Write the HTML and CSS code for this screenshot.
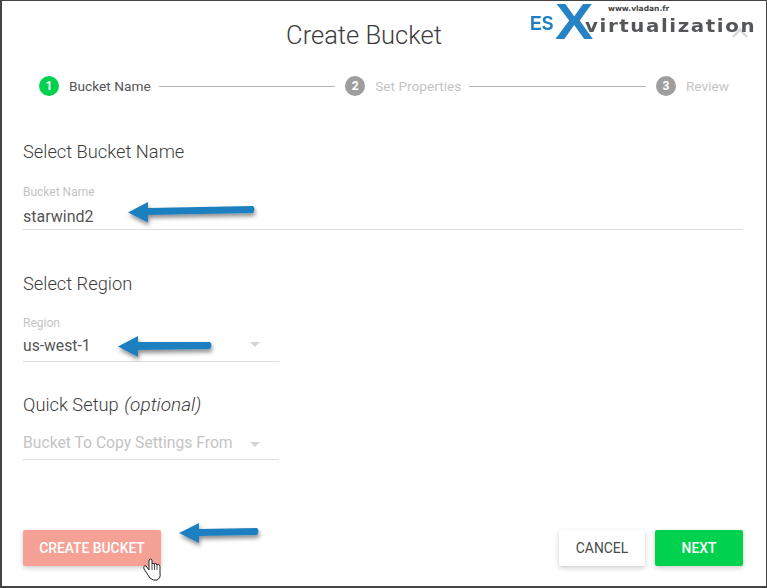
FILE: index.html
```html
<!DOCTYPE html>
<html lang="en">
<head>
<meta charset="utf-8">
<title>Create Bucket</title>
<link rel="stylesheet" href="styles.css">
</head>
<body>
<main class="dialog">
  <header class="dialog-header"><h1 class="dialog-title">Create Bucket</h1></header>
  <svg class="close-icon" width="24" height="24" viewBox="0 0 24 24"><path d="M5 17 L12 9.500 L19 17" fill="none" stroke="#d8d8d8" stroke-width="2.400"/></svg>
  <div class="logo">
    <span class="logo-url">www.vladan.fr</span>
    <span class="logo-es">ES</span><span class="logo-x">X</span><span class="logo-virt">virtualization</span>
  </div>

  <ol class="stepper">
    <li class="step step-active"><span class="step-num">1</span><span class="step-label">Bucket Name</span></li>
    <li class="step-line"></li>
    <li class="step"><span class="step-num">2</span><span class="step-label">Set Properties</span></li>
    <li class="step-line"></li>
    <li class="step"><span class="step-num">3</span><span class="step-label">Review</span></li>
  </ol>

  <section class="form-body">
    <h2 class="section-title section-first">Select Bucket Name</h2>
    <div class="field field-wide">
      <span class="field-label">Bucket Name</span>
      <span class="field-value">starwind2</span>
    </div>

    <h2 class="section-title section-region">Select Region</h2>
    <div class="field field-select">
      <span class="field-label">Region</span>
      <span class="field-value">us-west-1</span>
      <span class="caret"></span>
    </div>

    <h2 class="section-title section-quick">Quick Setup <em class="optional">(optional)</em></h2>
    <div class="field field-select field-empty">
      <span class="field-value field-placeholder">Bucket To Copy Settings From</span>
      <span class="caret"></span>
    </div>
  </section>

  <footer class="dialog-footer">
    <button class="btn btn-create">CREATE BUCKET</button>
    <div class="footer-right">
      <button class="btn btn-cancel">CANCEL</button>
      <button class="btn btn-next">NEXT</button>
    </div>
  </footer>

  <svg class="annotations" width="767" height="588" viewBox="0 0 767 588">
    <defs>
      <filter id="arrow-shadow" x="-20%" y="-60%" width="140%" height="240%">
        <feDropShadow dx="1" dy="3" stdDeviation="2" flood-color="#000" flood-opacity="0.45"/>
      </filter>
    </defs>
    <g fill="#1f7fc0" filter="url(#arrow-shadow)">
      <path d="M128 212.500 L148 202 L148 208 L253 206 Q256 209 253 213 L148 215 L148 222.500 Z"/>
      <path d="M118 346.500 L138 336 L138 342 L210 342 Q213 345 210 349 L138 350 L138 357 Z"/>
      <path d="M179 533 L199 523 L199 529 L257 528 Q260 531 257 535 L199 536 L199 543 Z"/>
    </g>
    <path d="M149 560 L149 570 L146 566 Q143 565 144 569 L150 578 Q153 581 157 580 Q161 578 160 573 L160 566 Q159 563 157 565 Q156 562 154 564 Q153 562 152 564 L152 560 Q151 558 149 560 Z" fill="#fff" stroke="#222" stroke-width="1"/>
    <path d="M152 564 V570 M154.500 564 V570 M157 565 V570" stroke="#222" stroke-width=".8" fill="none"/>
  </svg>
</main>
</body>
</html>
```

FILE: styles.css
```css
* { box-sizing: border-box; }
html, body { margin: 0; padding: 0; }
body { width: 767px; height: 588px; background: #fff; font-family: Roboto, "Liberation Sans", sans-serif; overflow: hidden; }

.dialog {
  position: relative;
  width: 767px;
  height: 588px;
  display: flex;
  flex-direction: column;
  border: 1px solid #444;
  border-width: 1px 1px 2px 2px;
  background: #fff;
  overflow: hidden;
}

.dialog-header { padding: 18px 40px 0 0; text-align: center; }
.dialog-title { margin: 0; font-size: 25.500px; line-height: 32px; font-weight: 300; color: #3c3c3c; }

.close-icon { position: absolute; left: 726px; top: 19px; }

.logo { position: absolute; left: 0; top: 0; width: 765px; height: 44px; pointer-events: none; }
.logo-url { position: absolute; left: 606px; top: 3px; font: bold 7.500px/10px "DejaVu Sans", sans-serif; color: #444; white-space: nowrap; }
.logo-es { position: absolute; left: 528px; top: 9px; font: bold 21px/26px "Liberation Sans", sans-serif; color: #1f7fc0; transform: scaleX(.84); transform-origin: left; }
.logo-x { position: absolute; left: 553px; top: 3px; font: bold 50px/36px "Liberation Sans", sans-serif; color: #2583c6; transform: scaleX(1.15); transform-origin: left; }
.logo-virt { position: absolute; left: 583px; top: 14px; font: bold 18px/22px "DejaVu Sans", sans-serif; color: #54565a; white-space: nowrap; letter-spacing: 1.450px; transform: scaleX(1.1); transform-origin: left; }

.stepper { list-style: none; display: flex; align-items: center; margin: 23px 0 0; padding: 0 37px; height: 24px; }
.step { display: flex; align-items: center; gap: 10px; }
.step-num { width: 20px; height: 20px; border-radius: 50%; background: #9e9e9e; color: #fff; font-size: 12px; font-weight: 700; line-height: 20px; text-align: center; }
.step-label { font-size: 13.700px; line-height: 20px; color: #c4c4c4; white-space: nowrap; }
.step-active .step-num { background: #00d14f; }
.step-active .step-label { color: #555; }
.step-line { flex: 1; height: 1px; background: #b5b5b5; margin: 0 10px 0 8px; }

.form-body { padding: 0 23px 0 21px; flex: 1; }
.section-title { margin: 0; font-size: 18.300px; line-height: 24px; font-weight: 300; color: #3c3c3c; }
.section-first { margin-top: 42px; }
.section-region { margin-top: 42px; }
.section-quick { margin-top: 31px; }
.optional { font-size: 19px; font-style: italic; margin-left: 1px; }

.field { position: relative; border-bottom: 1px solid #dedede; }
.field-wide { margin-top: 15px; height: 51px; padding-top: 6px; }
.field-select { width: 256px; margin-top: 15px; height: 51px; padding-top: 5px; }
.field-empty { margin-top: 16px; height: 27px; padding-top: 0; }
.field-label { display: block; font-size: 12px; line-height: 14px; color: #c4c4c4; }
.field-value { display: block; margin-top: 8px; font-size: 16px; line-height: 20px; color: #555; }
.field-select .field-value { margin-top: 6px; font-size: 15.700px; }
.field-select .field-placeholder { margin-top: 0; color: #c4c4c4; }
.caret { position: absolute; right: 19px; top: 31px; width: 0; height: 0; border: 5px solid transparent; border-top: 5px solid #d5d5d5; border-bottom: 0; }
.field-empty .caret { top: 9px; }

.dialog-footer { display: flex; justify-content: space-between; padding: 0 23px 20px 21px; }
.footer-right { display: flex; gap: 10px; }
.btn { height: 36px; border: 0; border-radius: 2px; font-family: Roboto, "Liberation Sans", sans-serif; font-size: 13.850px; padding: 0; box-shadow: 0 2px 5px rgba(0,0,0,.2); }
.btn-create { width: 138px; background: #f5a195; color: #fff; font-weight: 500; }
.btn-cancel { width: 86px; background: #fff; color: #4a4a4a; }
.btn-next { width: 88px; background: #00d14f; color: #fff; font-weight: 500; }

.annotations { position: absolute; left: -2px; top: -1px; pointer-events: none; }
```
